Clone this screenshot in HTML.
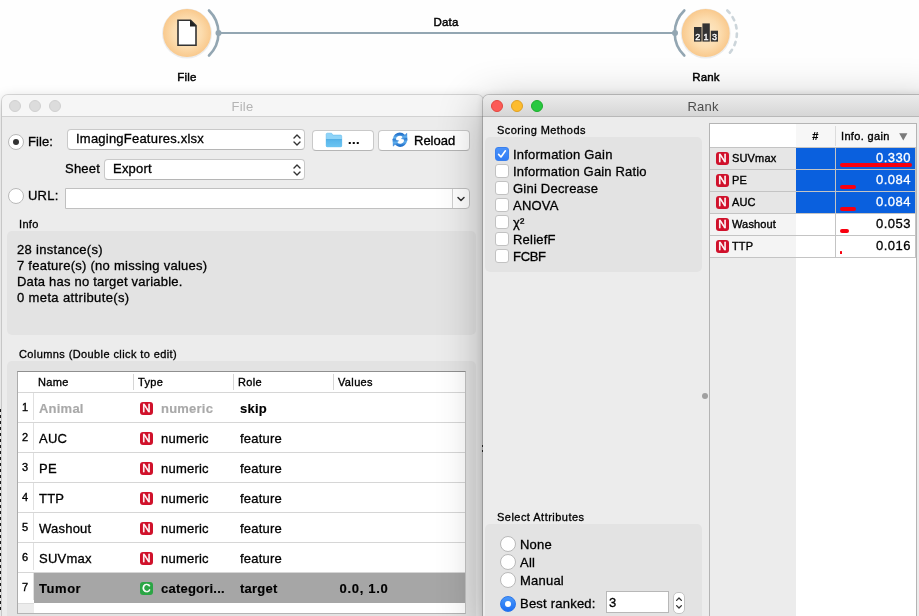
<!DOCTYPE html>
<html lang="en">
<head>
<meta charset="utf-8">
<title>Orange - File and Rank</title>
<style>
html,body{margin:0;padding:0;}
body{width:919px;height:616px;overflow:hidden;background:#fefefe;position:relative;
  font-family:"Liberation Sans","DejaVu Sans",sans-serif;font-size:13px;color:#000;}
.abs{position:absolute;}
#root{position:absolute;left:0;top:0;width:919px;height:616px;overflow:hidden;will-change:transform;}
.t{position:absolute;white-space:nowrap;line-height:16px;height:16px;letter-spacing:0.22px;-webkit-text-stroke:0.3px currentColor;}
.s11{font-size:11px;letter-spacing:0.35px;}
.hd{-webkit-text-stroke:0.35px currentColor;}
.s12{font-size:11.5px;letter-spacing:0.2px;-webkit-text-stroke:0.45px currentColor !important;}
.b{font-weight:bold;-webkit-text-stroke:0.15px currentColor;}
/* windows */
.win{position:absolute;background:#ececec;}
.titlebar{position:absolute;left:0;top:0;right:0;height:21px;background:#f6f6f6;border-bottom:1px solid #d2d2d2;border-radius:6px 6px 0 0;}
.tl{position:absolute;top:5px;width:12px;height:12px;border-radius:50%;box-sizing:border-box;}
.grp{position:absolute;background:#e3e3e3;border-radius:5px;}
.radio{position:absolute;width:16px;height:16px;border-radius:50%;background:#fff;box-sizing:border-box;border:1px solid #b9b9b9;}
.radio.on::after{content:"";position:absolute;left:4px;top:4px;width:6px;height:6px;border-radius:50%;background:#333;}
.radio.blue{background:linear-gradient(#4a98fa,#1b6ef3);border-color:#2b76ea;}
.radio.blue::after{content:"";position:absolute;left:4px;top:4px;width:6px;height:6px;border-radius:50%;background:#fff;}
.cb{position:absolute;width:14px;height:14px;border-radius:3px;background:#fff;box-sizing:border-box;border:1px solid #c2c2c2;}
.cb.on{background:linear-gradient(#4a92fa,#2f7cf5);border-color:#3a80ee;}
.combo{position:absolute;background:#fff;border-radius:4px;box-sizing:border-box;border:1px solid #c9c9c9;border-bottom-color:#b5b5b5;}
.btn{position:absolute;background:#fff;border-radius:4px;box-sizing:border-box;border:1px solid #c9c9c9;border-bottom-color:#b5b5b5;}
/* file table */
.ftable{position:absolute;left:17px;top:371px;width:449px;height:243px;background:#fff;box-sizing:border-box;border:1px solid;border-color:#8f8f8f #c4c4c4 #b4b4b4 #acacac;}
.hl{position:absolute;height:1px;background:#d6d6d6;}
.vl{position:absolute;width:1px;background:#d6d6d6;}
.ni{position:absolute;width:13px;height:13px;border-radius:3px;background:#d0112b;color:#fff;font-size:11.5px;line-height:13.5px;text-align:center;-webkit-text-stroke:0.45px #fff;}
.ni.c{background:#2ba545;}
</style>
</head>
<body>
<div id="root">

<!-- ===== canvas ===== -->
<svg class="abs" style="left:0;top:0" width="919" height="95" viewBox="0 0 919 95">
  <defs>
    <radialGradient id="ng" cx="50%" cy="50%" r="50%">
      <stop offset="0" stop-color="#fdeacb"/>
      <stop offset="0.6" stop-color="#fcdcae"/>
      <stop offset="1" stop-color="#f9c98d"/>
    </radialGradient>
  </defs>
  <line x1="219" y1="33" x2="675" y2="33" stroke="#93a6b2" stroke-width="2"/>
  <circle cx="187" cy="33.6" r="25" fill="#000" opacity="0.07"/>
  <circle cx="187" cy="33" r="24" fill="url(#ng)"/>
  <path d="M209 10.5 A 31.5 31.5 0 0 1 209 55.5" fill="none" stroke="#93a6b2" stroke-width="2.6" stroke-linecap="round"/>
  <circle cx="218.5" cy="33" r="3" fill="#93a6b2"/>
  <path d="M178 20.2 H190.5 L196 25.7 V45.2 H178 Z" fill="#fff" stroke="#333" stroke-width="1.6" stroke-linejoin="miter"/>
  <path d="M190 20 L196.4 26.4 H190 Z" fill="#222"/>
  <circle cx="705.7" cy="33.6" r="25" fill="#000" opacity="0.07"/>
  <circle cx="705.7" cy="33" r="24" fill="url(#ng)"/>
  <path d="M684.3 10.5 A 31.2 31.2 0 0 0 684.3 55.5" fill="none" stroke="#93a6b2" stroke-width="2.6" stroke-linecap="round"/>
  <circle cx="675" cy="33" r="3" fill="#93a6b2"/>
  <path d="M727.3 10.5 A 31.2 31.2 0 0 1 727.3 55.5" fill="none" stroke="#ccd5da" stroke-width="2.6" stroke-linecap="round" stroke-dasharray="3.5 5"/>
  <rect x="694" y="27" width="7.6" height="14.6" fill="#333"/>
  <rect x="702.4" y="23.4" width="7.4" height="18.2" fill="#333"/>
  <rect x="710.8" y="30.7" width="7.2" height="10.9" fill="#333"/>
  <text x="697.8" y="40.3" font-family="Liberation Sans, sans-serif" font-size="9" fill="#fff" stroke="#fff" stroke-width="0.35" text-anchor="middle">2</text>
  <text x="706.1" y="40.3" font-family="Liberation Sans, sans-serif" font-size="9" fill="#fff" stroke="#fff" stroke-width="0.35" text-anchor="middle">1</text>
  <text x="714.4" y="40.3" font-family="Liberation Sans, sans-serif" font-size="9" fill="#fff" stroke="#fff" stroke-width="0.35" text-anchor="middle">3</text>
</svg>
<div class="t s12 hd" style="left:396px;width:100px;top:14px;text-align:center;">Data</div>
<div class="t s12 hd" style="left:137px;width:100px;top:69px;text-align:center;">File</div>
<div class="t s12 hd" style="left:656px;width:100px;top:69px;text-align:center;">Rank</div>

<!-- ===== File window ===== -->
<div class="win" style="left:2px;top:95px;width:481px;height:530px;border-radius:6px 6px 0 0;box-shadow:0 0 0 1px rgba(0,0,0,0.13),0 4px 14px rgba(0,0,0,0.22);">
  <div class="titlebar">
    <div class="tl" style="left:7px;background:#dcdcdc;border:1px solid #d0d0d0;"></div>
    <div class="tl" style="left:27px;background:#dcdcdc;border:1px solid #d0d0d0;"></div>
    <div class="tl" style="left:47px;background:#dcdcdc;border:1px solid #d0d0d0;"></div>
    <div class="t" style="left:0;right:0;top:4px;text-align:center;color:#b4b4b4;-webkit-text-stroke:0;">File</div>
  </div>
  <div style="position:absolute;left:-2px;top:-95px;width:0;height:0;">
    <div class="radio on" style="left:8px;top:134px;"></div>
    <div class="t" style="left:28px;top:134px;letter-spacing:0.1px;">File:</div>
    <div class="combo" style="left:67px;top:129px;width:238px;height:21px;"></div>
    <div class="t" style="left:76px;top:131px;">ImagingFeatures.xlsx</div>
    <svg class="abs" style="left:290.7px;top:132px" width="12" height="16" viewBox="0 0 12 16"><path d="M3 6 L6 3 L9 6 M3 10 L6 13 L9 10" fill="none" stroke="#333" stroke-width="1.4" stroke-linecap="round" stroke-linejoin="round"/></svg>
    <div class="btn" style="left:312px;top:130px;width:62px;height:21px;"></div>
    <svg class="abs" style="left:325px;top:132px" width="18" height="16" viewBox="0 0 18 16">
      <defs><linearGradient id="fg" x1="0" y1="0" x2="0" y2="1"><stop offset="0" stop-color="#4fabe2"/><stop offset="0.25" stop-color="#5bb8ec"/><stop offset="1" stop-color="#6cc4f1"/></linearGradient></defs>
      <path d="M1.2 2.3 Q1.2 1.2 2.3 1.2 H6.6 L7.8 3.1 H15.6 Q16.7 3.1 16.7 4.2 V13.7 Q16.7 14.8 15.6 14.8 H2.3 Q1.2 14.8 1.2 13.7 Z" fill="#8fd4f8" stroke="#62bcee" stroke-width="0.6"/>
      <path d="M1 6.9 H16.9 V13.7 Q16.9 15 15.6 15 H2.3 Q1 15 1 13.7 Z" fill="url(#fg)"/>
    </svg>
    <div class="t b" style="left:348px;top:132px;letter-spacing:0.4px;">...</div>
    <div class="btn" style="left:378px;top:130px;width:92px;height:21px;"></div>
    <svg class="abs" style="left:392px;top:132px" width="16" height="16" viewBox="0 0 16 16">
      <defs><linearGradient id="rg" x1="0" y1="0" x2="0" y2="1"><stop offset="0" stop-color="#2574cc"/><stop offset="0.5" stop-color="#62b0ee"/><stop offset="1" stop-color="#2574cc"/></linearGradient></defs>
      <g fill="url(#rg)" stroke="url(#rg)">
      <path d="M2.7 8.9 A5.3 5.3 0 0 1 12.6 5.2" fill="none" stroke-width="3.2"/>
      <path d="M14.8 1.2 L15.3 8.3 L9.3 6.6 Z" stroke-width="0.4" stroke-linejoin="round"/>
      <path d="M13.3 6.5 A5.3 5.3 0 0 1 3.4 10.2" fill="none" stroke-width="3.2"/>
      <path d="M1.2 14.2 L0.7 7.1 L6.7 8.8 Z" stroke-width="0.4" stroke-linejoin="round"/>
      </g>
    </svg>
    <div class="t hd" style="left:414px;top:133px;letter-spacing:0;">Reload</div>
    <div class="t" style="left:65px;top:161px;">Sheet</div>
    <div class="combo" style="left:104px;top:159px;width:201px;height:21px;"></div>
    <div class="t" style="left:113px;top:161px;">Export</div>
    <svg class="abs" style="left:290.7px;top:162px" width="12" height="16" viewBox="0 0 12 16"><path d="M3 6 L6 3 L9 6 M3 10 L6 13 L9 10" fill="none" stroke="#333" stroke-width="1.4" stroke-linecap="round" stroke-linejoin="round"/></svg>
    <div class="radio" style="left:8px;top:188px;"></div>
    <div class="t" style="left:28px;top:188px;">URL:</div>
    <div class="abs" style="left:65px;top:188px;width:405px;height:21px;background:#fff;box-sizing:border-box;border:1px solid #c0c0c0;border-radius:0 4px 4px 0;"></div>
    <div class="abs" style="left:452px;top:189px;width:1px;height:19px;background:#d0d0d0;"></div>
    <svg class="abs" style="left:455px;top:193px" width="12" height="12" viewBox="0 0 12 12"><path d="M3 4.5 L6 7.5 L9 4.5" fill="none" stroke="#333" stroke-width="1.5" stroke-linecap="round" stroke-linejoin="round"/></svg>
    <div class="t s11" style="left:19px;top:216px;">Info</div>
    <div class="grp" style="left:7px;top:231px;width:469px;height:104px;"></div>
    <div class="t" style="left:17px;top:242px;letter-spacing:0.3px;">28 instance(s)</div>
    <div class="t" style="left:17px;top:258px;letter-spacing:0.26px;">7 feature(s) (no missing values)</div>
    <div class="t" style="left:17px;top:274px;letter-spacing:0.21px;">Data has no target variable.</div>
    <div class="t" style="left:17px;top:290px;letter-spacing:0.37px;">0 meta attribute(s)</div>
    <div class="t s11" style="left:19px;top:346px;letter-spacing:0.4px;">Columns (Double click to edit)</div>
    <div class="grp" style="left:7px;top:361px;width:469px;height:270px;"></div>
    <div class="ftable">
      <div class="t s11 hd" style="left:20px;top:2px;">Name</div>
      <div class="t s11 hd" style="left:120px;top:2px;">Type</div>
      <div class="t s11 hd" style="left:220px;top:2px;">Role</div>
      <div class="t s11 hd" style="left:320px;top:2px;">Values</div>
      <div class="vl" style="left:115px;top:2px;height:16px;"></div>
      <div class="vl" style="left:215px;top:2px;height:16px;"></div>
      <div class="vl" style="left:315px;top:2px;height:16px;"></div>
      <div class="hl" style="left:0;top:20px;width:447px;"></div>
      <div class="abs" style="left:0;top:231px;width:16px;height:10px;background:#ececec;border-top:1px solid #dcdcdc;box-sizing:border-box;"></div>
      <div class="vl" style="left:15px;top:21px;height:27px;background:#e0e0e0;"></div>
      <div class="t s11 hd" style="left:4px;top:27px;">1</div>
      <div class="t b" style="left:21px;top:29px;color:#a9a9a9;">Animal</div>
      <div class="ni" style="left:122px;top:30px;">N</div>
      <div class="t b" style="left:143px;top:29px;color:#a9a9a9;">numeric</div>
      <div class="t b" style="left:222px;top:29px;">skip</div>
      <div class="hl" style="left:0;top:50px;width:447px;"></div>
      <div class="vl" style="left:15px;top:51px;height:27px;background:#e0e0e0;"></div>
      <div class="t s11 hd" style="left:4px;top:57px;">2</div>
      <div class="t" style="left:21px;top:59px;">AUC</div>
      <div class="ni" style="left:122px;top:60px;">N</div>
      <div class="t" style="left:143px;top:59px;">numeric</div>
      <div class="t" style="left:222px;top:59px;">feature</div>
      <div class="hl" style="left:0;top:80px;width:447px;"></div>
      <div class="vl" style="left:15px;top:81px;height:27px;background:#e0e0e0;"></div>
      <div class="t s11 hd" style="left:4px;top:87px;">3</div>
      <div class="t" style="left:21px;top:89px;">PE</div>
      <div class="ni" style="left:122px;top:90px;">N</div>
      <div class="t" style="left:143px;top:89px;">numeric</div>
      <div class="t" style="left:222px;top:89px;">feature</div>
      <div class="hl" style="left:0;top:110px;width:447px;"></div>
      <div class="vl" style="left:15px;top:111px;height:27px;background:#e0e0e0;"></div>
      <div class="t s11 hd" style="left:4px;top:117px;">4</div>
      <div class="t" style="left:21px;top:119px;">TTP</div>
      <div class="ni" style="left:122px;top:120px;">N</div>
      <div class="t" style="left:143px;top:119px;">numeric</div>
      <div class="t" style="left:222px;top:119px;">feature</div>
      <div class="hl" style="left:0;top:140px;width:447px;"></div>
      <div class="vl" style="left:15px;top:141px;height:27px;background:#e0e0e0;"></div>
      <div class="t s11 hd" style="left:4px;top:147px;">5</div>
      <div class="t" style="left:21px;top:149px;">Washout</div>
      <div class="ni" style="left:122px;top:150px;">N</div>
      <div class="t" style="left:143px;top:149px;">numeric</div>
      <div class="t" style="left:222px;top:149px;">feature</div>
      <div class="hl" style="left:0;top:170px;width:447px;"></div>
      <div class="vl" style="left:15px;top:171px;height:27px;background:#e0e0e0;"></div>
      <div class="t s11 hd" style="left:4px;top:177px;">6</div>
      <div class="t" style="left:21px;top:179px;">SUVmax</div>
      <div class="ni" style="left:122px;top:180px;">N</div>
      <div class="t" style="left:143px;top:179px;">numeric</div>
      <div class="t" style="left:222px;top:179px;">feature</div>
      <div class="hl" style="left:0;top:200px;width:447px;"></div>
      <div class="abs" style="left:16px;top:201px;width:431px;height:30px;background:#a6a6a6;"></div>
      <div class="vl" style="left:15px;top:201px;height:27px;background:#e0e0e0;"></div>
      <div class="t s11 hd" style="left:4px;top:207px;">7</div>
      <div class="t b" style="left:21px;top:209px;letter-spacing:0.55px;">Tumor</div>
      <div class="ni c" style="left:122px;top:210px;">C</div>
      <div class="t b" style="left:143px;top:209px;">categori...</div>
      <div class="t b" style="left:222px;top:209px;">target</div>
      <div class="t b" style="left:321.5px;top:209px;letter-spacing:0.7px;">0.0, 1.0</div>
    </div>
  </div>
</div>

<!-- ===== Rank window ===== -->
<div class="win" style="left:483px;top:95px;width:460px;height:530px;border-radius:6px 6px 0 0;box-shadow:0 0 0 1px rgba(0,0,0,0.18),0 10px 45px rgba(0,0,0,0.30),0 0 9px rgba(0,0,0,0.14);">
  <div class="titlebar" style="background:linear-gradient(#ebebeb,#d6d6d6);border-bottom-color:#b8b8b8;">
    <div class="tl" style="left:8px;background:#fc5b57;border:1px solid #e2463f;"></div>
    <div class="tl" style="left:28px;background:#fdbc2e;border:1px solid #dfa023;"></div>
    <div class="tl" style="left:48px;background:#28c840;border:1px solid #1dad2b;"></div>
    <div class="t" style="left:170px;width:100px;top:4px;text-align:center;color:#4d4d4d;-webkit-text-stroke:0;">Rank</div>
  </div>
  <div style="position:absolute;left:-483px;top:-95px;width:0;height:0;">
    <div class="t s11" style="left:497px;top:122px;letter-spacing:0.42px;">Scoring Methods</div>
    <div class="grp" style="left:485px;top:137px;width:217px;height:135px;"></div>
    <div class="cb on" style="left:495px;top:147px;"></div>
    <svg class="abs" style="left:495px;top:147px" width="14" height="14" viewBox="0 0 14 14"><path d="M3.6 7.4 L6 10 L10.4 3.8" fill="none" stroke="#fff" stroke-width="1.6" stroke-linecap="round" stroke-linejoin="round"/></svg>
    <div class="t" style="left:513px;top:147px;">Information Gain</div>
    <div class="cb" style="left:495px;top:164px;"></div>
    <div class="t" style="left:513px;top:164px;letter-spacing:0.165px;">Information Gain Ratio</div>
    <div class="cb" style="left:495px;top:181px;"></div>
    <div class="t" style="left:513px;top:181px;">Gini Decrease</div>
    <div class="cb" style="left:495px;top:198px;"></div>
    <div class="t" style="left:513px;top:198px;">ANOVA</div>
    <div class="cb" style="left:495px;top:215px;"></div>
    <div class="t" style="left:513px;top:215px;">χ²</div>
    <div class="cb" style="left:495px;top:232px;"></div>
    <div class="t" style="left:513px;top:232px;">ReliefF</div>
    <div class="cb" style="left:495px;top:249px;"></div>
    <div class="t" style="left:513px;top:249px;letter-spacing:-0.3px;">FCBF</div>
    <div class="abs" style="left:702px;top:393px;width:6px;height:6px;border-radius:50%;background:#a0a0a0;"></div>
    <div class="t s11" style="left:497px;top:509px;letter-spacing:0.47px;">Select Attributes</div>
    <div class="grp" style="left:485px;top:524px;width:217px;height:110px;"></div>
    <div class="radio" style="left:500px;top:536px;"></div>
    <div class="t" style="left:520px;top:537px;">None</div>
    <div class="radio" style="left:500px;top:554px;"></div>
    <div class="t" style="left:520px;top:555px;">All</div>
    <div class="radio" style="left:500px;top:572px;"></div>
    <div class="t" style="left:520px;top:573px;">Manual</div>
    <div class="radio blue" style="left:500px;top:596px;"></div>
    <div class="t" style="left:520px;top:596px;">Best ranked:</div>
    <div class="abs" style="left:606px;top:591px;width:63px;height:22px;background:#fff;box-sizing:border-box;border:1px solid #b8b8b8;"></div>
    <div class="t" style="left:609px;top:595px;">3</div>
    <div class="abs" style="left:673px;top:592px;width:12px;height:22px;background:#fff;box-sizing:border-box;border:1px solid #c4c4c4;border-radius:5px;"></div>
    <svg class="abs" style="left:673px;top:592px" width="12" height="22" viewBox="0 0 12 22"><path d="M3.6 8.4 L6 6 L8.4 8.4 M3.6 13.6 L6 16 L8.4 13.6" fill="none" stroke="#333" stroke-width="1.3" stroke-linecap="round" stroke-linejoin="round"/></svg>
    <div class="abs" style="left:709px;top:123px;width:208px;height:520px;background:#fff;box-sizing:border-box;border:1px solid #b4b4b4;">
      <div class="abs" style="left:0;top:24px;width:86px;height:500px;background:#ececec;"></div>
      <div class="abs" style="left:86px;top:0;width:120px;height:23px;background:#f7f7f7;"></div>
      <div class="t s11 b" style="left:86px;width:39px;top:4px;text-align:center;">#</div>
      <div class="t s11 hd" style="left:131px;top:4px;">Info. gain</div>
      <svg class="abs" style="left:189px;top:9px" width="9" height="8" viewBox="0 0 9 8"><path d="M0.2 0.3 H8.4 L4.3 7.4 Z" fill="#7a7a7a"/></svg>
      <div class="vl" style="left:125px;top:2px;height:20px;background:#dcdcdc;"></div>
      <div class="hl" style="left:0;top:23px;width:206px;background:#c4c4c4;"></div>
      <div class="abs" style="left:0;top:24px;width:86px;height:21px;background:#e6e6e6;"></div>
      <div class="ni" style="left:6px;top:28px;">N</div>
      <div class="t s11 hd" style="left:22px;top:26px;letter-spacing:0.15px;">SUVmax</div>
      <div class="abs" style="left:86px;top:24px;width:120px;height:21px;background:#0a60de;"></div>
      <div class="t" style="left:126px;width:75px;top:26px;text-align:right;color:#fff;letter-spacing:0.5px;">0.330</div>
      <div class="abs" style="left:130px;top:39px;width:71.5px;height:4px;border-radius:2px;background:#f8000f;"></div>
      <div class="hl" style="left:0;top:45px;width:206px;background:#c4c4c4;"></div>
      <div class="abs" style="left:0;top:46px;width:86px;height:21px;background:#e6e6e6;"></div>
      <div class="ni" style="left:6px;top:50px;">N</div>
      <div class="t s11 hd" style="left:22px;top:48px;letter-spacing:0.15px;">PE</div>
      <div class="abs" style="left:86px;top:46px;width:120px;height:21px;background:#0a60de;"></div>
      <div class="t" style="left:126px;width:75px;top:48px;text-align:right;color:#fff;letter-spacing:0.5px;">0.084</div>
      <div class="abs" style="left:130px;top:61px;width:16px;height:4px;border-radius:2px;background:#f8000f;"></div>
      <div class="hl" style="left:0;top:67px;width:206px;background:#c4c4c4;"></div>
      <div class="abs" style="left:0;top:68px;width:86px;height:21px;background:#e6e6e6;"></div>
      <div class="ni" style="left:6px;top:72px;">N</div>
      <div class="t s11 hd" style="left:22px;top:70px;letter-spacing:0.15px;">AUC</div>
      <div class="abs" style="left:86px;top:68px;width:120px;height:21px;background:#0a60de;"></div>
      <div class="t" style="left:126px;width:75px;top:70px;text-align:right;color:#fff;letter-spacing:0.5px;">0.084</div>
      <div class="abs" style="left:130px;top:83px;width:16px;height:4px;border-radius:2px;background:#f8000f;"></div>
      <div class="hl" style="left:0;top:89px;width:206px;background:#c4c4c4;"></div>
      <div class="abs" style="left:0;top:90px;width:86px;height:21px;background:#f4f4f4;"></div>
      <div class="ni" style="left:6px;top:94px;">N</div>
      <div class="t s11 hd" style="left:22px;top:92px;letter-spacing:0.15px;">Washout</div>
      <div class="t" style="left:126px;width:75px;top:92px;text-align:right;color:#000;letter-spacing:0.5px;">0.053</div>
      <div class="abs" style="left:130px;top:105px;width:8.5px;height:4px;border-radius:2px;background:#f8000f;"></div>
      <div class="hl" style="left:0;top:111px;width:206px;background:#c4c4c4;"></div>
      <div class="abs" style="left:0;top:112px;width:86px;height:21px;background:#f4f4f4;"></div>
      <div class="ni" style="left:6px;top:116px;">N</div>
      <div class="t s11 hd" style="left:22px;top:114px;letter-spacing:0.15px;">TTP</div>
      <div class="t" style="left:126px;width:75px;top:114px;text-align:right;color:#000;letter-spacing:0.5px;">0.016</div>
      <div class="abs" style="left:130px;top:127px;width:2px;height:2.5px;border-radius:0.5px;background:#f8000f;"></div>
      <div class="hl" style="left:0;top:133px;width:206px;background:#c4c4c4;"></div>
      <div class="vl" style="left:125px;top:24px;height:110px;background:#c4c4c4;"></div>
      <div class="vl" style="left:205px;top:24px;height:110px;background:#c4c4c4;"></div>
    </div>
  </div>
</div>

<div class="abs" style="left:0;top:409px;width:1px;height:203px;background:repeating-linear-gradient(#1a1a1a 0,#1a1a1a 3px,transparent 3px,transparent 6px);"></div>
<div class="abs" style="left:482px;top:445px;width:1px;height:2px;background:#222;"></div>
<div class="abs" style="left:482px;top:450px;width:1px;height:2px;background:#222;"></div>

</div>
</body>
</html>
